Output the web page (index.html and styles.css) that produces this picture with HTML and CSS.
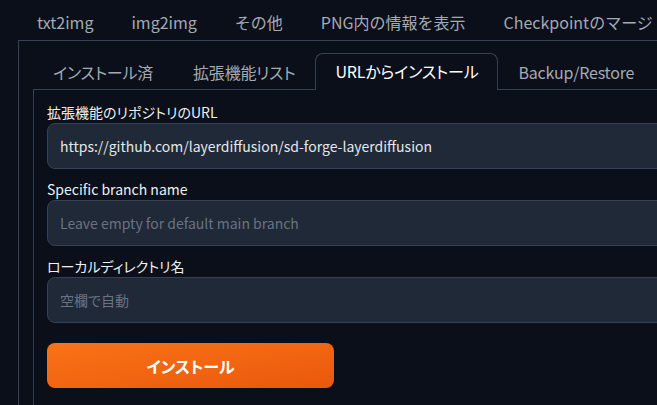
FILE: index.html
```html
<!DOCTYPE html>
<html lang="ja">
<head>
<meta charset="utf-8">
<title>Extensions</title>
<link rel="stylesheet" href="styles.css">
</head>
<body>
<div class="app">
  <nav class="top-tabs">
    <span class="tab">txt2img</span>
    <span class="tab">img2img</span>
    <span class="tab">その他</span>
    <span class="tab">PNG内の情報を表示</span>
    <span class="tab">Checkpointのマージ</span>
  </nav>
  <section class="outer-panel">
    <nav class="sub-tabs">
      <span class="subtab">インストール済</span>
      <span class="subtab">拡張機能リスト</span>
      <span class="subtab selected">URLからインストール</span>
      <span class="subtab">Backup/Restore</span>
    </nav>
    <div class="inner-panel">
      <div class="field">
        <label class="label">拡張機能のリポジトリのURL</label>
        <div class="input">https://github.com/layerdiffusion/sd-forge-layerdiffusion</div>
      </div>
      <div class="field">
        <label class="label">Specific branch name</label>
        <div class="input placeholder">Leave empty for default main branch</div>
      </div>
      <div class="field">
        <label class="label">ローカルディレクトリ名</label>
        <div class="input placeholder">空欄で自動</div>
      </div>
      <button class="install">インストール</button>
    </div>
  </section>
</div>
</body>
</html>
```
FILE: styles.css
```css
html, body {
  margin: 0;
  padding: 0;
  background: #0b0f19;
  overflow: hidden;
}
body {
  width: 657px;
  height: 405px;
  font-family: "Noto Sans CJK JP", "Noto Sans", sans-serif;
  font-feature-settings: "palt";
  color: #e5e7eb;
}
.app {
  width: 1000px;
  padding-left: 18px;
}
.top-tabs {
  display: flex;
  height: 40px;
  align-items: center;
  padding-top: 3px;
  box-sizing: border-box;
  font-feature-settings: normal;
}
.tab {
  padding: 0 19px;
  font-size: 16px;
  color: #a3aab5;
  white-space: nowrap;
}
.outer-panel {
  border-top: 1px solid #374151;
  border-left: 1px solid #374151;
  padding: 12px 0 0 14px;
}
.sub-tabs {
  display: flex;
  height: 36px;
  align-items: center;
  position: relative;
  z-index: 1;
}
.subtab {
  padding: 0 19px;
  height: 36px;
  line-height: 36px;
  font-size: 16px;
  letter-spacing: -0.2px;
  color: #a3aab5;
  white-space: nowrap;
  box-sizing: border-box;
  border: 1px solid transparent;
  border-bottom: none;
}
.subtab.selected {
  color: #ffffff;
  border-color: #374151;
  border-radius: 8px 8px 0 0;
  background: #0b0f19;
  height: 37px;
  line-height: 35px;
  margin-bottom: -1px;
}
.inner-panel {
  border-top: 1px solid #374151;
  border-left: 1px solid #374151;
  padding: 11px 0 20px 13px;
  display: flex;
  flex-direction: column;
  gap: 9px;
}
.field {
  display: flex;
  flex-direction: column;
}
.label {
  font-size: 14px;
  line-height: 22px;
  color: #eef0f3;
}
.input {
  width: 900px;
  height: 46px;
  box-sizing: border-box;
  background: #1f2937;
  border: 1px solid #374151;
  border-radius: 8px;
  padding: 0 12px;
  display: flex;
  align-items: center;
  font-size: 14px;
  color: #e5e7eb;
}
.input.placeholder {
  color: #6b7280;
}
.install {
  margin-top: 11px;
  width: 287px;
  height: 45px;
  border: none;
  border-radius: 8px;
  background: linear-gradient(to bottom right, #f97316, #ea580c);
  color: #ffffff;
  font-family: "Noto Sans CJK JP", sans-serif;
  font-feature-settings: "palt";
  font-weight: 700;
  font-size: 16px;
}
```
